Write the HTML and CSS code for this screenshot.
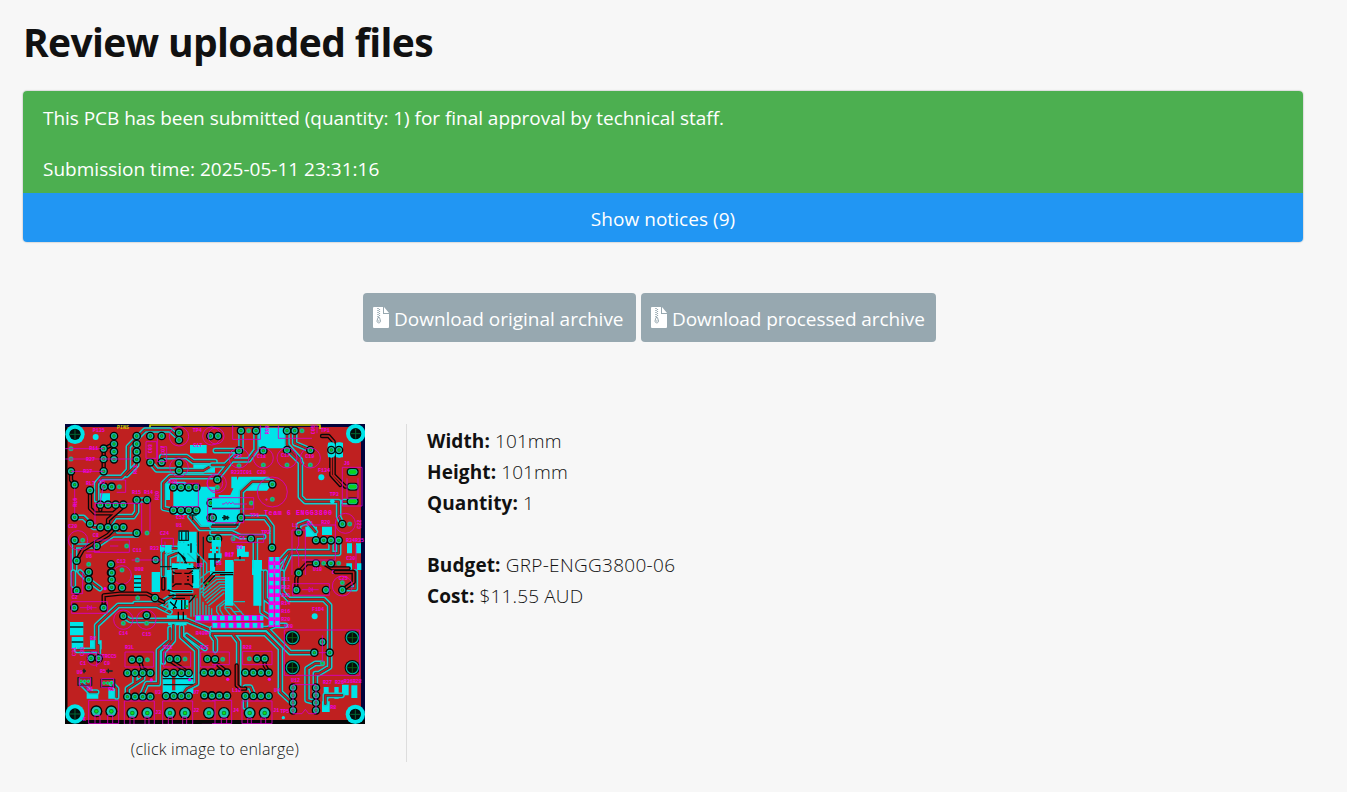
FILE: index.html
```html
<!DOCTYPE html>
<html lang="en">
<head>
<meta charset="utf-8">
<title>Review uploaded files</title>
<link rel="stylesheet" href="styles.css">
</head>
<body>
<main class="page">
  <h1 class="title"><span>Review uploaded files</span></h1>
  <section class="status">
    <div class="submitted">
      <p><span class="line-a">This PCB has been submitted (quantity: 1) for final approval by technical staff.</span></p>
      <p><span class="line-b">Submission time: 2025-05-11 23:31:16</span></p>
    </div>
    <button class="notices"><span>Show notices (9)</span></button>
  </section>
  <div class="downloads">
    <button class="download original"><svg class="zip" viewBox="0 0 16 21"><path fill="#fff" d="M1 0H10V7H16V20Q16 21 15 21H1Q0 21 0 20V1Q0 0 1 0Z M11 0L16 6H11Z"/><path fill="none" stroke="#97a8b0" stroke-width="1.5" stroke-dasharray="1 1" d="M5 1v9"/><path fill="none" stroke="#97a8b0" stroke-width="1.2" stroke-dasharray="1 1" d="M6.5 2v8"/><path fill="none" stroke="#97a8b0" d="M5 10.5h1.5l1 3.500c0 2.500-3.500 2.500-3.500 0zM5 14h1.500"/></svg><span>Download original archive</span></button>
    <button class="download processed"><svg class="zip" viewBox="0 0 16 21"><path fill="#fff" d="M1 0H10V7H16V20Q16 21 15 21H1Q0 21 0 20V1Q0 0 1 0Z M11 0L16 6H11Z"/><path fill="none" stroke="#97a8b0" stroke-width="1.5" stroke-dasharray="1 1" d="M5 1v9"/><path fill="none" stroke="#97a8b0" stroke-width="1.2" stroke-dasharray="1 1" d="M6.5 2v8"/><path fill="none" stroke="#97a8b0" d="M5 10.5h1.5l1 3.500c0 2.500-3.500 2.500-3.500 0zM5 14h1.500"/></svg><span>Download processed archive</span></button>
  </div>
  <section class="details">
    <figure class="preview">
      <svg class="board" viewBox="0 0 300 300">
        <defs>
          <path id="t1" d="M110 240V190L125 172H185L205 150V80L255 30H330L350 48M200 165L230 135V70M271 127L290 150H357M305 127V110H380L400 125H465M357 152H430L450 140M340 271L310 265V190L330 170H465M44 292H70L100 322H121M144 322L165 290H220L230 275V240H261M155 345H230M44 361V450M44 378H110L165 340M310 465V400L330 385H350M325 465V410L350 400M465 325H420L390 290"/>
          <path id="k1" d="M131 154V86L162 72M33 154V180L44 194M90 211V265L105 280H160L190 254M121 254V270M144 322V300L190 260M50 422L68 390 144 345 167 322"/>
          <path id="t2" d="M87 32V90L40 135H0M132 32V90L110 120H60L20 170M81 92H10M225 32V75L265 120V230L280 245H380V290L390 312M248 32V70L295 90M225 88L268 130M0 320H70L88 290V215L120 185H180M88 293H160L180 320V380M395 245H422M0 338H60L85 350H155M357 361V395H230L190 440M380 361V400H235L205 465M260 337V315L285 305 310 335M130 350V440M15 356V420"/>
          <path id="k2" d="M330 48H350L365 65V165L400 200H422M358 90V165L385 195M260 458L285 430H310M335 430L360 445H410"/>
          <path id="t3" d="M40 0V40M60 0L80 20 120 50M110 185V160L175 100H290L330 120M50 235H110V180M115 260V220M190 132L210 145H380L465 180M330 170V205L295 235V335H260L245 370M340 160V205L310 240V270M365 165V195L410 235V335L380 350 364 372M380 190L435 230M248 303V320L202 350V372M225 303V330M65 335L90 360H110M155 335L170 350V375M225 95H300L340 70"/>
          <path id="k3" d="M131 105V70L180 65H260L310 90M310 20V50M270 303L247 290 239 265M386 303L360 285 329 265"/>
          <path id="t4" d="M10 235V205L0 190M65 190L80 210V340M0 170H165L235 242H307M0 185H160L205 230V360L243 395M353 242V155 100L335 82H230L210 60V0M353 242V285L320 305H310V390M331 274H310L285 290V385L312 392M160 0V80L180 95M150 0V120L180 140M165 170L190 160H220M430 0V50H391M100 345H115L125 370M100 372V405M340 395V370H390"/>
          <path id="k4" d="M158 260V280L170 300M74 280V340L85 350H100M253 52V20L260 3M45 300L20 280M370 0H425V30L390 55"/>
          <path id="p1" d="M162 48h0M162 72h0M162 95h0M162 118h0M230 48h0M230 72h0M230 95h0M230 118h0M271 48h0M305 48h0M271 127h0M305 127h0M357 38h0M357 60h0M357 130h0M357 152h0M131 86h0M33 154h0M131 117h0M131 154h0M44 194h0M44 292h0M90 211h0M90 311h0M132 200h0M155 200h0M121 254h0M144 254h0M167 254h0M190 254h0M121 322h0M144 322h0M167 322h0M190 322h0M230 240h0M261 240h0M230 339h0M44 361h0M110 378h0M340 202h0M363 202h0M386 202h0M409 202h0M340 271h0M363 271h0M386 271h0M409 271h0M451 48h0M452 249h0M452 293h0M451 356h0M287 420h0M153 433h0M86 458h0M153 458h0M50 422h0"/>
          <path id="p2" d="M18 48h0M87 32h0M132 32h0M225 32h0M248 32h0M81 92h0M154 92h0M225 90h0M295 90h0M16 179h0M181 193h0M2 293h0M87 293h0M117 356h0M18 356h0M180 383h0M260 337h0M260 458h0M312 361h0M335 361h0M357 361h0M380 361h0M312 430h0M357 430h0M391 312h0M358 90h0M381 90h0"/>
          <path id="p3" d="M86 0h0M86 23h0M86 46h0M155 2h0M155 23h0M155 46h0M50 56h0M186 47h0M43 107h0M131 107h0M285 78h0M190 132h0M260 130h0M93 259h0M116 259h0M216 263h0M239 263h0M329 261h0M352 261h0M442 261h0M202 303h0M225 303h0M248 303h0M271 303h0M318 303h0M341 303h0M364 303h0M386 303h0M432 302h0M455 302h0M202 374h0M225 374h0M248 374h0M271 374h0M318 372h0M341 372h0M364 372h0M386 372h0M433 370h0M455 370h0"/>
          <path id="m3" d="M63 328h0M74 328h0M85 328h0M132 333h0M143 333h0M154 333h0"/>
          <path id="p4" d="M260 3h0M253 54h0M342 54h0M391 54h0M331 210h0M307 242h0M353 242h0M9 262h0M135 260h0M158 260h0M22 302h0M45 302h0M100 302h0M124 302h0M147 302h0M170 302h0M0 371h0M22 371h0M45 371h0M100 372h0M124 372h0M147 372h0M170 372h0M243 347h0M243 370h0M243 392h0M243 415h0M312 347h0M312 370h0M312 392h0M312 415h0"/>
          <path id="s1" d="M33 86h0M33 117h0M178 200h0M261 339h0M68 361h0M200 378h0M232 420h0M86 433h0M186 450h0"/>
          <path id="s2" d="M110 32h0M270 32h0M81 137h0M154 135h0M225 135h0M295 135h0M16 202h0M181 238h0M118 249h0M63 356h0M335 430h0M380 430h0M413 312h0"/>
          <path id="s3" d="M233 78h0M190 154h0M260 154h0M262 263h0M375 261h0"/>
          <path id="s4" d="M391 32h0M331 274h0M32 262h0M112 260h0"/>
          <g id="big"><circle r="29" fill="#00e4e8"/><circle r="17" fill="#020d0d"/><path d="M-15 0H15M0-15V15" stroke="#063" stroke-width="3"/></g>
          <g id="via"><circle r="23" fill="#070909"/><circle r="18" fill="#04100a" stroke="#00ad9d" stroke-width="4"/><path d="M-17 0H17M0-17V17" stroke="#075b12" stroke-width="3"/></g>
          <g id="term"><circle r="18" fill="#050909"/><circle r="14" fill="#20c4b4"/><circle r="7" fill="#0b8f2a"/><circle r="4" fill="#08e51a"/></g>
        </defs>
        <rect width="300" height="300" fill="#bf2020"/>
        <path d="M0 0H300V300H0Z" fill="none" stroke="#050505" stroke-width="5"/>
        <path d="M0 0H300V3H0Z M296 0h4v300h-4z" fill="#02033b"/>
        <path d="M0 296H300V300H0Z M0 155H2V181H0Z M0 205h2v20H0z" fill="#050505"/>
        <path d="M85 4V1H255V5" fill="none" stroke="#c8cb00" stroke-width="1.7"/>
        <text x="52" y="5" class="yellow">PINS</text>

        <g transform="translate(-5 -4) scale(.333333)">
          <path class="copper" d="M340 185H375L395 200H465V325H430L400 285H340ZM303 190H330V240H303ZM390 75H440V100H390ZM400 133H465V158H400ZM355 335H410V425H350ZM340 435H400V465H340ZM120 220H150V255H120ZM300 375H335V395H300ZM450 400h15v65h-15z"/>
          <use href="#t1" class="cy"/><use href="#t1" class="edge"/><use href="#t1" class="core"/>
          <use href="#k1" class="bk"/><use href="#k1" class="core"/>
          <use href="#p1" class="pk"/><use href="#p1" class="pc"/><use href="#p1" class="pd"/><use href="#p1" class="pg"/><use href="#s1" class="sc"/><use href="#s1" class="pg"/>
          <use href="#big" x="45" y="43"/><circle cx="107" cy="51" r="9" class="copper"/>
          <path class="dark" d="M357 333H385V361H357ZM365 335V359M378 335V359M388 285H410M398 285V300M355 375H410M345 430L370 440H400L420 455M340 460H400M415 335V465M430 350V465M300 440H340"/>
          <path class="silk" d="M16 86H131M16 117H220M33 154H131M115 180H197V217H170M130 200L120 250M44 205V282M105 310V250H245M258 65H290V115H258ZM292 55V125H320V80H300M245 250V340M270 245V335M103 360H208V397H103ZM215 420H305M443 235H465V305H443ZM315 365v20M330 355H305V380H340V355ZM335 190H415V260H335M120 395H80M33 400V465M150 378H175"/>
          <g class="silk"><circle cx="357" cy="49" r="29"/><circle cx="357" cy="142" r="28"/><circle cx="54" cy="361" r="29"/><circle cx="455" cy="48" r="27"/><circle cx="465" cy="190" r="23"/><circle cx="186" cy="465" r="28"/></g>
          <g class="label"><text x="98" y="36">P135</text><text x="88" y="91">R11</text><text x="78" y="122">R27</text><text x="70" y="158">R37</text><text x="78" y="195">RL7</text><text x="118" y="193">U5</text><text x="216" y="223">R15 R14</text><text x="25" y="325">C20</text><text x="98" y="351">C8</text><text x="300" y="345">C24</text><text x="270" y="390">R33</text><text x="218" y="397">C11</text><text x="78" y="415">U6</text><text x="170" y="428">C13</text><text x="224" y="453">U08</text><text x="348" y="320">U1</text><text x="348" y="296">C52</text><text x="325" y="189">U20</text><text x="398" y="36">TP4</text><text x="400" y="81">C17</text><text transform="translate(50 260) rotate(-90)">RL6</text><text transform="translate(230 162) rotate(-90)">RL2</text><text transform="translate(275 100) rotate(-90)">C03</text><text transform="translate(315 105) rotate(-90)">C07</text><text transform="translate(296 240) rotate(-90)">R20</text></g>
        </g>

        <g transform="translate(147 -4) scale(.333333)">
          <path class="copper" d="M145 23H222V85H145L130 65ZM20 225H55L80 170H170L182 190 165 212H100L85 230V310H0V235H20ZM348 68H370V112H348ZM372 68H393V112H372ZM58 170H75V205H58ZM88 170H105V205H88ZM280 320H315V350H280ZM330 320H360V345H330ZM75 395H110V410H75ZM40 425H65V465H40ZM120 420H150V465H120ZM170 425h30v40h-30zM405 370h15v30h-15zM432 370h15v30h-15zM403 430h17v20h-17zM435 430h13v20h-13zM0 370h25v55H0z"/>
          <use href="#t2" class="cy"/><use href="#t2" class="edge"/><use href="#t2" class="core"/>
          <use href="#k2" class="bk"/><use href="#k2" class="core"/>
          <rect x="347" y="67" width="22" height="46" rx="10" class="copper"/><rect x="371" y="67" width="22" height="46" rx="10" class="copper"/>
          <use href="#p2" class="pk"/><use href="#p2" class="pc"/><use href="#p2" class="pd"/><use href="#p2" class="pg"/><use href="#s2" class="sc"/><use href="#s2" class="pg"/>
          <use href="#big" x="431" y="41"/><circle cx="328" cy="172" r="9" class="copper"/><circle cx="361" cy="244" r="7" class="copper"/>
          <g fill="#08d51a" stroke="#031510" stroke-width="4"><rect x="406" y="146" width="32" height="20" rx="9"/><rect x="406" y="190" width="32" height="20" rx="9"/><rect x="406" y="234" width="32" height="20" rx="9"/></g>
          <g fill="none" stroke="#18b8a0" stroke-width="3"><rect x="409" y="149" width="26" height="14" rx="7"/><rect x="409" y="193" width="26" height="14" rx="7"/><rect x="409" y="237" width="26" height="14" rx="7"/></g>
          <path class="dark" d="M0 265H85M0 315H80M30 293H52M36 287V299L47 293ZM47 287V299"/>
          <path class="silk" d="M62 15V58H145V15M199 15V55H300M0 233H125V267H0M30 252h7l5-5 5 5 5-5 5 5 5-5 5 5H105M0 280V308H95V275M391 142H450V258H391ZM405 175V235H438V175M240 330H280V465M240 330V465M60 344H155V367H60ZM295 15H315V40M270 315H370V420H270M260 350V375L253 390 260 405V440M170 420H215V465H170ZM432 375V465"/>
          <g class="silk"><circle cx="181" cy="216" r="45"/><circle cx="81" cy="114" r="30"/><circle cx="154" cy="114" r="30"/><circle cx="225" cy="114" r="30"/><circle cx="295" cy="114" r="30"/><circle cx="400" cy="310" r="30"/><circle cx="14" cy="190" r="29"/><circle cx="12" cy="48" r="24"/></g>
          <g class="label"><text x="156" y="285" class="team" textLength="204">Team 6 ENGG3800</text><text x="64" y="113">C27</text><text x="135" y="113">C18</text><text x="207" y="112">C17</text><text x="280" y="115">C19</text><text x="57" y="162">R23IC01</text><text x="135" y="162">C20</text><text x="160" y="243">+</text><text x="318" y="155">F134</text><text x="353" y="229">TP3</text><text x="326" y="35">TP1</text><text x="114" y="290">TP6</text><text x="148" y="342">TP2</text><text x="80" y="360">C4</text><text x="39" y="410">R17</text><text x="75" y="388">R9</text><text x="240" y="322">L1</text><text x="285" y="315">R1</text><text x="328" y="313">R20</text><text x="402" y="365">R34R35</text><text x="303" y="453">U10</text><text x="360" y="461">C41</text><text x="403" y="421">C30</text><text x="395" y="135">J6</text><text transform="translate(172 43) rotate(-90)">R09</text><text transform="translate(310 43) rotate(-90)">C05</text><text transform="translate(448 326) rotate(-90)">C22</text></g>
        </g>

        <g transform="translate(-5 148) scale(.333333)">
          <path class="copper" d="M30 150H70V190H30ZM35 195H70V230H35ZM90 205H125V232H90ZM80 360H115V380H80ZM145 355H175V380H145ZM308 305H400V365H308ZM222 10H243V60H222ZM275 0H300V60H275ZM320 130H380V160H325Z"/>
          <use href="#t3" class="cy"/><use href="#t3" class="edge"/><use href="#t3" class="core"/>
          <use href="#k3" class="bk"/><use href="#k3" class="core"/>
          <path d="M341 300V355" stroke="#bf2020" stroke-width="10"/>
          <use href="#p3" class="pk"/><use href="#p3" class="pc"/><use href="#p3" class="pd"/><use href="#p3" class="pg"/><use href="#s3" class="sc"/><use href="#s3" class="pg"/>
          <path class="dark" d="M54 317H95V340H54ZM123 322H164V345H123Z"/><use href="#m3" class="mc"/><use href="#m3" class="pg"/>
          <use href="#big" x="45" y="426"/>
          <use href="#term" x="109" y="418"/><use href="#term" x="154" y="418"/><use href="#term" x="217" y="423"/><use href="#term" x="262" y="423"/><use href="#term" x="330" y="423"/><use href="#term" x="375" y="423"/><use href="#term" x="447" y="423"/>
          <path class="dark" d="M308 320H400M310 338H400M65 297H78M138 297H158M72 290V304M145 290V304M222 20H243M222 33H243M222 46H243M30 165H70M35 210H70"/>
          <path class="silk" d="M35 0V65H68V0M35 89H142V124H35ZM60 107H110M82 100V114L94 107ZM94 100V114M86 385H176V455H86ZM105 455V430H120V455M143 455V430H158V455M195 240H281V285H195ZM311 240H392V285H311ZM422 240H465V285H422ZM193 387H283V457H193ZM210 457V435H222V457M255 457V435H267V457M308 387H398V457H308ZM325 457V435H337V457M368 457V435H380V457M425 387H465V457H425M70 245H110V285M58 317H92V342H58ZM125 320H161V347H125ZM405 150H465"/>
          <g class="silk"><circle cx="190" cy="143" r="29"/><circle cx="259" cy="143" r="29"/><circle cx="103" cy="259" r="21"/></g>
          <g class="magenta"><circle cx="274" cy="324" r="5"/><circle cx="389" cy="323" r="5"/><circle cx="135" cy="50" r="5"/></g>
          <g class="label"><text x="177" y="188">C14</text><text x="247" y="193">C15</text><text x="35" y="81">C2</text><text x="90" y="205">R8</text><text x="125" y="259">TRCC5</text><text x="60" y="280">C1</text><text x="132" y="280">C9</text><text x="195" y="232">R3L</text><text x="310" y="231">R2B</text><text x="420" y="231">R2C</text><text x="50" y="305">U9</text><text x="120" y="302">R5</text><text x="80" y="356">R8</text><text x="145" y="356">R1</text><text x="285" y="366">U3</text><text x="400" y="366">U7</text><text x="286" y="425">J3</text><text x="400" y="421">J2</text><text x="68" y="448">K</text><text x="407" y="190">R40R41</text><text transform="translate(48 252) rotate(-90)">C31</text><text transform="translate(72 252) rotate(-90)">C33</text></g>
        </g>

        <g transform="translate(147 148) scale(.333333)">
          <path class="copper" d="M335 345H350V380H335ZM367 345H380V380H367ZM390 338H410V370H390ZM418 340H436V378H418ZM330 388H353V420H330Z"/>
          <use href="#t4" class="cy"/><use href="#t4" class="edge"/><use href="#t4" class="core"/>
          <use href="#k4" class="bk"/><use href="#k4" class="core"/>
          <path d="M178 -45V165M196 -45V165" stroke="#ef00ee" stroke-width="17"/><path d="M178 -45V165M196 -45V165" stroke="#00e4e8" stroke-width="12" stroke-dasharray="13 11"/>
          <use href="#p4" class="pk"/><use href="#p4" class="pc"/><use href="#p4" class="pd"/><use href="#p4" class="pg"/><use href="#s4" class="sc"/><use href="#s4" class="pg"/>
          <use href="#via" x="241" y="197"/><use href="#via" x="421" y="197"/><use href="#via" x="241" y="287"/><use href="#via" x="421" y="287"/>
          <use href="#big" x="430" y="427"/>
          <use href="#term" x="36" y="423"/><use href="#term" x="113" y="423"/><use href="#term" x="158" y="423"/><circle cx="308" cy="133" r="9" class="copper"/><circle cx="214" cy="437" r="5" class="copper"/>
          <path class="silk" d="M217 174H443V310H217ZM331 190V270M320 242H343M242 35H352V70H242ZM270 53H320M291 46V60L301 53ZM301 46V60M92 238H180V278H92ZM0 240H52V278H0M90 387H180V455H90ZM107 455V438H118V455M147 455V438H161V455M0 385H59V455H0M28 455V438H44V455M243 338H312V425H290L280 412 270 425H243Z"/>
          <circle cx="391" cy="42" r="30" class="silk"/><circle cx="172" cy="322" r="5" class="magenta"/><circle cx="47" cy="322" r="5" class="magenta"/>
          <g class="label"><text x="208" y="28">R11</text><text x="208" y="52">R12</text><text x="208" y="76">R13</text><text x="208" y="99">R14</text><text x="208" y="122">R16</text><text x="208" y="147">R20</text><text x="300" y="117">F1D4</text><text x="216" y="168">U30</text><text x="92" y="230">R28</text><text x="60" y="361">L10</text><text x="186" y="361">U4</text><text x="237" y="329">U12</text><text x="333" y="336">R27 R26</text><text x="395" y="334">R36R28</text><text x="63" y="419">J4</text><text x="184" y="420">J1</text><text x="205" y="422">TP5</text><text x="355" y="412">R8</text><text x="380" y="23">C25</text></g>
        </g>

        <!-- microcontroller and its fan-out -->
        <g transform="translate(100 116) scale(.333333)">
          <path class="fan" d="M45 5V80M56 5V70M67 40L105 75V180M78 20L115 60V170M90 35L125 70V100M105 150L150 110H180M108 158L155 118H180M111 166L160 126H180M116 174L165 134H180M120 182L168 142H180M125 190L172 150H180M130 198L178 158M100 140L145 100H180M100 120L130 95H180M78 230V165M87 230V170M96 230V175M105 230V180M114 230V185M123 230V195M132 230V200M140 230V205M165 230L155 215V200L180 180M180 235L165 210V200L182 188M200 230L180 205V196M215 225L195 203H182M230 215H205L198 203M0 200L30 170M0 215L40 180M205 190L240 230M207 60H240M207 185H240"/>
          <path class="copper" d="M20 70H85V88H20ZM5 90H20V150H5ZM83 88H102V145H83ZM15 150H85V160H15ZM180 60H205V197H180ZM265 60H289V197H265ZM10 180H70V207H10ZM38 8H68V40H38ZM73 8H95V38H73ZM140 0H168V20H140ZM130 40H170V55H130ZM0 15H20V38H0ZM216 18H240V50H216ZM216 36H250V50H216Z"/>
          <path d="M28 88H80V148H28Z" fill="#bf2020"/>
          <path class="ink" d="M22 95L32 100H50M58 100H72L84 92M22 140L32 132H50M58 132H72L84 142M24 105V130M83 105V130M20 86H38M65 86H88M8 150L25 155H82M10 166H85M20 175H60M38 36L60 55V70M48 45L65 70M78 10V38M98 55V85M102 48V85M115 130L145 98H205M165 104H205M120 138L150 106M15 185L35 205M35 180L25 207M50 180V210M60 180V207M40 215V240M55 215V240M150 35V80M130 57H165M225 48V58M72 188L92 165M66 110H72M66 120H72"/>
          <path d="M150 18V40M135 30H160" stroke="#00e4e8" stroke-width="6"/>
          <g fill="#06b82a"><circle cx="74" cy="72" r="3"/><circle cx="65" cy="199" r="4"/><circle cx="92" cy="168" r="3"/><circle cx="128" cy="130" r="4"/></g>
          <path d="M90 234H295M140 256H295" stroke="#df00de" stroke-width="18"/><path d="M93 234H295M143 256H295" stroke="#00e4e8" stroke-width="14" stroke-dasharray="14 10"/>
          <g class="label"><text x="95" y="80">U2</text><text x="152" y="74">C6</text><text x="180" y="48">R17</text><text x="215" y="28">R9</text></g>
        </g>
      </svg>
      <figcaption><span>(click image to enlarge)</span></figcaption>
    </figure>
    <div class="facts">
      <div><b class="b1">Width:</b> <span class="v1">101mm</span></div>
      <div><b class="b2">Height:</b> <span class="v1">101mm</span></div>
      <div><b class="b3">Quantity:</b> <span class="v1">1</span></div>
      <div class="gap"><b class="b4">Budget:</b> <span class="v2">GRP-ENGG3800-06</span></div>
      <div><b class="b5">Cost:</b> <span class="v3">$11.55 AUD</span></div>
    </div>
  </section>
</main>
</body>
</html>
```
FILE: styles.css
```css
* { box-sizing: border-box; }
body { margin: 0; background: #f7f7f7; color: #111; font-family: "Open Sans", "Noto Sans", sans-serif; overflow: hidden; }
.page { padding: 14px 44px 0 23px; height: 792px; }
.title { margin: 0; height: 77px; font-size: 39px; font-weight: 700; line-height: 56px; white-space: nowrap; letter-spacing: -0.63px; }
.status { border-radius: 4px; overflow: hidden; height: 151px; box-shadow: 0 0 1px 1px #dcdcdc; color: #fff; font-size: 19px; }
.submitted { height: 102px; background: #4caf50; padding: 13px 20px; display: flex; flex-direction: column; gap: 23px; }
.submitted p { margin: 0; line-height: 28px; white-space: nowrap; }
.line-a { letter-spacing: -0.035px; }
.line-b { letter-spacing: 0.01px; }
.notices { display: block; width: 100%; height: 49px; border: 0; background: #2196f3; color: #fff; font: 19px/28px "Open Sans", sans-serif; letter-spacing: 0.05px; padding: 2px 0 0; }
.downloads { display: flex; gap: 5px; padding: 51px 0 0 340px; }
.download { height: 49px; border: 0; border-radius: 4px; background: #97a8b0; color: #fff; padding: 3px 0 0 10px; display: flex; align-items: center; gap: 5px; font: 19px/28px "Open Sans", sans-serif; white-space: nowrap; letter-spacing: -0.02px; }
.original { width: 273px; }
.processed { width: 295px; letter-spacing: -0.08px; }
.zip { width: 16px; height: 21px; flex: none; margin-top: -3px; }
.details { display: flex; padding-top: 82px; }
.preview { margin: 0; width: 384px; height: 338px; padding-left: 42px; border-right: 1px solid #ddd; }
.board { display: block; width: 300px; height: 300px; overflow: hidden; }
.preview figcaption { width: 300px; text-align: center; font-size: 16px; line-height: 24px; padding-top: 13px; font-weight: 350; letter-spacing: 0.22px; white-space: nowrap; }
.facts { padding: 2px 0 0 20px; font-size: 19px; line-height: 31px; font-weight: 330; letter-spacing: 0.1px; white-space: nowrap; }
.facts b { font-weight: 700; }
.v2 { letter-spacing: 0.3px; }
.v3 { letter-spacing: 0.15px; }
.gap { margin-top: 31px; }

.board path, .board use { stroke-linejoin: round; }
.copper { fill: #00e4e8; }
.cy, .edge, .core, .bk, .pk, .pc, .pd, .pg, .sc, .mc { fill: none; stroke-linecap: round; }
.cy { stroke: #12cccc; stroke-width: 17px; }
.edge { stroke: #2a3c3c; stroke-width: 8px; }
.core { stroke: #bf2020; stroke-width: 5px; }
.bk { stroke: #080808; stroke-width: 13px; }
.pk { stroke: #050808; stroke-width: 26px; }
.pc { stroke: #1cbca8; stroke-width: 18px; }
.pd { stroke: #0b7430; stroke-width: 10px; }
.sc { stroke: #24a68f; stroke-width: 15px; }
.pg { stroke: #08d31a; stroke-width: 6px; }
.mc { stroke: #1cbca8; stroke-width: 11px; }
.dark { fill: none; stroke: #062626; stroke-width: 4px; }
.fan { fill: none; stroke: #12b8b8; stroke-width: 4px; }
.ink { fill: none; stroke: #050808; stroke-width: 4px; }
.silk { fill: none; stroke: #d500c4; stroke-width: 2.6px; }
.magenta { fill: #ef00ee; }
.label { fill: #f000e8; font: 700 15px "Liberation Mono", monospace; }
.team { font-size: 20px; }
.yellow { fill: #cfcf00; font: 700 5px "Liberation Mono", monospace; }
```
